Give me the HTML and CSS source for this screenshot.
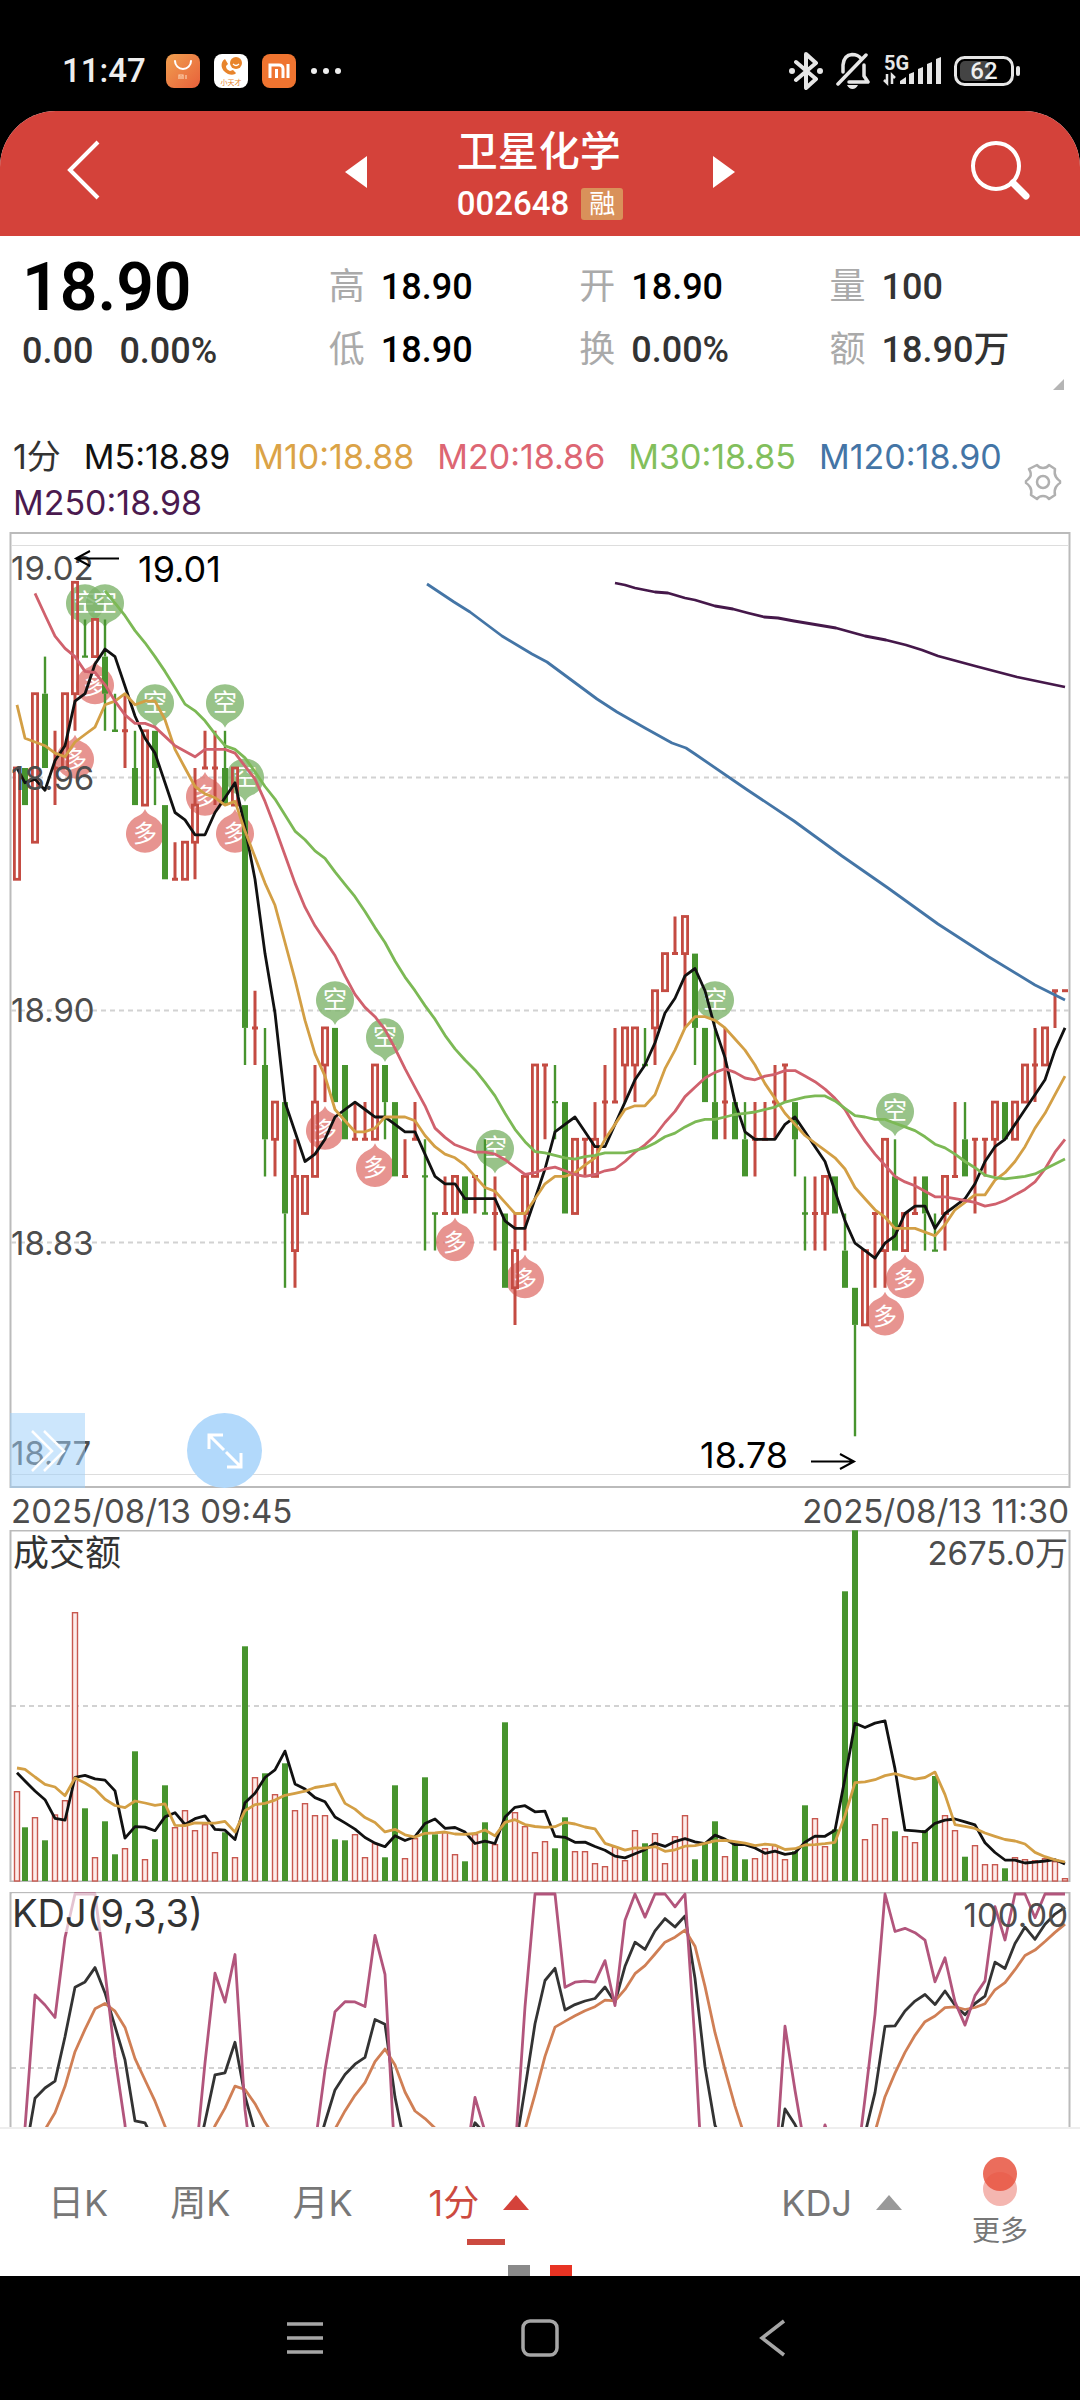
FILE: index.html
```html
<!DOCTYPE html>
<html lang="zh-CN">
<head>
<meta charset="utf-8">
<meta name="viewport" content="width=device-width, initial-scale=1">
<title>卫星化学 002648</title>
<link rel="stylesheet" href="styles.css">
</head>
<body>
<div class="status">
  <div class="status-left">
    <span class="clock">11:47</span>
    <svg class="app-icon" viewBox="0 0 34 34"><defs><linearGradient id="bag" x1="0" y1="0" x2="1" y2="1"><stop offset="0" stop-color="#f0a050"/><stop offset="1" stop-color="#e8603a"/></linearGradient></defs><rect width="34" height="34" rx="8" fill="url(#bag)"/><path d="M9 7a8 8 0 0 0 16 0" fill="none" stroke="#fff" stroke-width="2" stroke-linecap="round"/><path d="M13 25v-4h4v4M15 22v3M20 21v4" fill="none" stroke="#fbd0b0" stroke-width="1.2"/></svg>
    <svg class="app-icon" viewBox="0 0 34 34"><rect width="34" height="34" rx="8" fill="#fff"/><path d="M11 5c-5 3-5 11 3 15 3 1 7 1 8-1l-3-3-3 1c-3-1-4-3-4-5l2-2z" fill="#e8842c"/><circle cx="22" cy="9" r="6" fill="#e8842c"/><path d="M19 10q3 3 6 0" stroke="#fff" fill="none" stroke-width="1.2"/><text x="17" y="31" text-anchor="middle" class="tiny">小天才</text></svg>
    <svg class="app-icon" viewBox="0 0 34 34"><rect width="34" height="34" rx="8" fill="#ef7430"/><path d="M8 24V11h9q4 0 4 4v9M14.500 15v9M26 10v14" fill="none" stroke="#fff" stroke-width="3"/></svg>
    <svg class="dots" viewBox="0 0 32 8"><circle cx="4" cy="4" r="3"/><circle cx="16" cy="4" r="3"/><circle cx="28" cy="4" r="3"/></svg>
  </div>
  <div class="status-right">
    <svg class="s-icon" viewBox="0 0 34 38"><path d="M7 10l20 17-10 9V2l10 9L7 28" fill="none" stroke="#e6e6e6" stroke-width="4" stroke-linejoin="round" stroke-linecap="round"/><circle cx="3" cy="19" r="3" fill="#e6e6e6"/><circle cx="31" cy="19" r="3" fill="#e6e6e6"/></svg>
    <svg class="s-icon" viewBox="0 0 34 38"><path d="M7 20V13Q8 3 16 2.500q6 0 9 4M28 13v11l4 6H13M2 32L30 3" fill="none" stroke="#e6e6e6" stroke-width="3.500" stroke-linejoin="round" stroke-linecap="round"/><path d="M11 33h11q-2 4-5.500 4T11 33z" fill="#e6e6e6"/></svg>
    <svg class="signal" viewBox="0 0 58 38"><text x="1" y="18" class="net">5G</text><path d="M4 22v9l-3-3M9 32v-9l3 3" fill="none" stroke="#e6e6e6" stroke-width="2.500"/><g fill="#e6e6e6"><path d="M17 32v-3l6-4v7z"/><path d="M26 32V22l5-2v12z"/><path d="M35 32V17l5-2v17z"/><path d="M44 32V12l5-2v22z"/><path d="M53 32V7l5-2v27z"/></g></svg>
    <svg class="battery" viewBox="0 0 66 30"><rect x="1.500" y="1.500" width="57" height="27" rx="9" fill="none" stroke="#e6e6e6" stroke-width="3"/><rect x="6" y="5" width="30" height="20" rx="5" fill="#444"/><rect x="62" y="10" width="4" height="10" rx="2" fill="#e6e6e6"/><text x="30" y="23" text-anchor="middle" class="pct">62</text></svg>
  </div>
</div>

<main class="app">
  <header class="topbar">
    <button class="icon-btn back" aria-label="返回"><svg width="34" height="60" viewBox="0 0 34 60"><path d="M32 2L4 30l28 28" fill="none" stroke="#fff" stroke-width="4"/></svg></button>
    <div class="picker">
      <button class="icon-btn" aria-label="上一只"><svg width="22" height="32" viewBox="0 0 22 32"><path d="M22 0v32L0 16z" fill="#fff"/></svg></button>
      <div class="names">
        <h1>卫星化学</h1>
        <p class="code">002648 <span class="badge">融</span></p>
      </div>
      <button class="icon-btn" aria-label="下一只"><svg width="22" height="32" viewBox="0 0 22 32"><path d="M0 0v32l22-16z" fill="#fff"/></svg></button>
    </div>
    <button class="icon-btn search" aria-label="搜索"><svg width="60" height="62" viewBox="0 0 60 62"><circle cx="26" cy="27" r="23" fill="none" stroke="#fff" stroke-width="4"/><path d="M43 44l13 13" stroke="#fff" stroke-width="7" stroke-linecap="round"/></svg></button>
  </header>

  <section class="quote">
    <div class="price">
      <strong>18.90</strong>
      <p><span>0.00</span><span>0.00%</span></p>
    </div>
    <dl class="stats">
      <div><dt>高</dt><dd>18.90</dd></div>
      <div><dt>开</dt><dd>18.90</dd></div>
      <div><dt>量</dt><dd class="soft">100</dd></div>
      <div><dt>低</dt><dd>18.90</dd></div>
      <div><dt>换</dt><dd class="soft">0.00%</dd></div>
      <div><dt>额</dt><dd class="soft">18.90万</dd></div>
    </dl>
    <svg class="corner" viewBox="0 0 11 11"><path d="M11 0v11H0z" fill="#b5b5b5"/></svg>
  </section>

  <section class="legend">
    <div class="averages">
      <span class="period">1分</span><span class="m5">M5:18.89</span><span class="m10">M10:18.88</span><span class="m20">M20:18.86</span><span class="m30">M30:18.85</span><span class="m120">M120:18.90</span><span class="m250">M250:18.98</span>
    </div>
    <button class="icon-btn gear" aria-label="设置"><svg width="38" height="38" viewBox="0 0 38 38" fill="none" stroke="#b0b0b0" stroke-width="2.500" stroke-linejoin="round"><path d="M13 2q2 3 6 3t6-3l6 4q-1 5 1 8t4 4v2q-2 1-4 4t-1 8l-6 4q-2-3-6-3t-6 3l-6-4q1-5-1-8t-4-4v-2q2-1 4-4t-1-8z"/><circle cx="19" cy="19" r="6"/></svg></button>
  </section>

  <section class="kline">
    <svg class="chart" viewBox="0 0 1080 956">
      <g class="frame"><path d="M10 1H1070M10 955H1070M10.500 0V956M1069.500 0V956"/></g>
      <g class="inner"><path d="M11 13.500H1069M11 942.500H1069"/></g>
      <g class="grid"><path d="M11 245.500H1069M11 478.500H1069M11 710.500H1069"/></g>
      <g id="marks"></g>
      <g id="candles"></g>
      <g id="averages"></g>
      <g class="axis"><text x="11" y="48">19.02</text><text x="11" y="258">18.96</text><text x="11" y="490">18.90</text><text x="11" y="723">18.83</text><text x="11" y="933">18.77</text></g>
      <g class="peak"><text x="138" y="50">19.01</text><path d="M119 26.500H76M90 19L76 26.500L90 34"/><text x="700" y="936">18.78</text><path d="M811 929.500H854M840 922L854 929.500L840 937"/></g>
    </svg>
    <button class="expand-side" aria-label="展开"><svg width="36" height="44" viewBox="0 0 36 44"><path d="M2 2l20 20L2 42M14 2l20 20-20 20" fill="none" stroke="#fff" stroke-width="2.500"/></svg></button>
    <button class="fullscreen" aria-label="全屏"><svg width="38" height="38" viewBox="0 0 38 38"><path d="M17 3H3v14M3 3l15 15M21 35h14V21M35 35L20 20" fill="none" stroke="#fff" stroke-width="3"/></svg></button>
  </section>
  <div class="dates"><time>2025/08/13 09:45</time><time>2025/08/13 11:30</time></div>

  <section class="volume">
    <svg class="chart" viewBox="0 0 1080 352">
      <g class="grid"><path d="M11 176H1069"/></g>
      <g class="frame"><path d="M10 .5H1070M10 351.500H1070M10.500 0V352M1069.500 0V352"/></g>
      <g id="bars"></g>
      <g id="barlines"></g>
      <text class="caption" x="13" y="36">成交额</text>
      <text class="limit" x="1068" y="35">2675.0万</text>
    </svg>
  </section>

  <section class="kdj">
    <svg class="chart" viewBox="0 0 1080 235">
      <g class="grid"><path d="M11 176H1069"/></g>
      <g class="frame"><path d="M10 .5H1070M10.500 0V235M1069.500 0V235"/></g>
      <g id="kdjlines"></g>
      <rect x="12" y="1" width="186" height="39" fill="#fff" opacity=".65"/>
      <text class="caption wide" x="12" y="35">KDJ(9,3,3)</text>
      <text class="limit" x="1068" y="35">100.00</text>
    </svg>
  </section>

  <footer class="tools">
    <nav class="periods">
      <button>日K</button><button>周K</button><button>月K</button>
      <button class="active">1分<svg class="tri" viewBox="0 0 26 15"><path d="M13 0l13 15H0z" fill="#d4423a"/></svg></button>
    </nav>
    <button class="indicator">KDJ<svg class="tri" viewBox="0 0 26 15"><path d="M13 0l13 15H0z" fill="#999"/></svg></button>
    <button class="more"><svg width="36" height="52" viewBox="0 0 36 52"><circle cx="18" cy="33" r="17" fill="#f4b6b0"/><circle cx="18" cy="18" r="17" fill="#e8533f" opacity=".85"/></svg>更多</button>
    <div class="pages"><i></i><i class="on"></i></div>
  </footer>
</main>

<nav class="sysnav">
  <button class="icon-btn" aria-label="菜单"><svg width="38" height="38" viewBox="0 0 38 38"><path d="M1 5h36M1 19h36M1 33h36" stroke="#a6a6a6" stroke-width="3.500"/></svg></button>
  <button class="icon-btn" aria-label="主页"><svg width="38" height="38" viewBox="0 0 38 38"><rect x="2" y="2" width="34" height="34" rx="7" fill="none" stroke="#a6a6a6" stroke-width="3.500"/></svg></button>
  <button class="icon-btn" aria-label="后退"><svg width="38" height="38" viewBox="0 0 38 38"><path d="M28 2L6 19l22 17" fill="none" stroke="#a6a6a6" stroke-width="3.500"/></svg></button>
</nav>
<script src="chart.js"></script>
</body>
</html>
```
FILE: styles.css
```css
* { box-sizing: border-box; }
body {
  margin: 0;
  background: #000;
  color: #333;
  font-family: Inter, "Noto Sans CJK SC", sans-serif;
  font-size: 33px;
  line-height: 46px;
}
h1, p, dl, dd { margin: 0; }
button {
  border: 0;
  padding: 0;
  background: none;
  font: inherit;
  color: inherit;
}
.icon-btn { display: flex; }
svg { display: block; }

.status {
  height: 111px;
  padding: 32px 60px 0 62px;
  display: flex;
  justify-content: space-between;
  color: #eee;
  font-family: Roboto, "Noto Sans CJK SC", sans-serif;
}
.status-left, .status-right { display: flex; align-items: center; height: 78px; }
.status-left { gap: 14px; }
.status-right { gap: 13px; }
.clock { font-weight: 500; margin-right: 6px; }
.app-icon { width: 34px; height: 34px; }
.dots { width: 32px; height: 8px; fill: #eee; }
.tiny { font-size: 7px; fill: #e8842c; }
.s-icon { width: 34px; height: 38px; }
.signal { width: 58px; height: 38px; overflow: visible; }
.net { font-size: 20px; font-weight: 700; fill: #e6e6e6; }
.battery { width: 66px; height: 30px; }
.pct { font-size: 24px; font-weight: 500; fill: #eee; }

.app {
  background: #fff;
  border-radius: 56px 56px 0 0;
  overflow: hidden;
}
.topbar {
  height: 125px;
  padding: 0 50px 8px;
  background: #d4423a;
  color: #fff;
  display: grid;
  grid-template-columns: 1fr auto 1fr;
  align-items: center;
  font-family: Roboto, "Noto Sans CJK SC", sans-serif;
}
.back { padding-left: 16px; }
.search { justify-self: end; }
.picker { display: flex; align-items: center; gap: 90px; }
.picker > .icon-btn { padding-top: 5px; }
.names { padding-top: 10px; }
h1 { font-size: 41px; line-height: 58px; font-weight: 500; }
.code {
  display: flex;
  align-items: center;
  gap: 12px;
  font-size: 33px;
  font-weight: 500;
}
.badge {
  padding: 0 8px;
  border-radius: 3px;
  background: #d9915a;
  font-size: 26px;
  line-height: 32px;
  font-weight: 400;
}

.quote {
  position: relative;
  height: 194px;
  padding: 20px 0 0 22px;
  display: grid;
  grid-template-columns: 29fr 71fr;
  font-family: Roboto, "Noto Sans CJK SC", sans-serif;
  font-size: 36px;
}
.price strong {
  display: block;
  font-size: 66px;
  line-height: 64px;
  font-weight: 600;
  color: #000;
}
.price p { display: flex; gap: 26px; line-height: 62px; font-weight: 500; }
.stats {
  display: grid;
  grid-template-columns: repeat(3, 1fr);
  grid-auto-rows: 63px;
  line-height: 63px;
}
.stats div { display: flex; gap: 16px; }
.stats dt { color: #aaa; }
.stats dd { color: #000; font-weight: 500; }
.stats .soft { color: #333; }
.corner { position: absolute; right: 16px; bottom: 40px; width: 11px; height: 11px; }

.legend {
  display: flex;
  align-items: center;
  justify-content: space-between;
  padding: 4px 18px 6px 13px;
  font-size: 34px;
}
.averages { display: flex; flex-wrap: wrap; column-gap: 23px; }
.gear { padding-top: 4px; }
.period { color: #333; }
.m5 { color: #111; }
.m10 { color: #dba347; }
.m20 { color: #dd6673; }
.m30 { color: #82bf5c; }
.m120 { color: #4475a6; }
.m250 { color: #4b1a4f; }

.kline { position: relative; }
.chart { width: 100%; height: auto; overflow: hidden; }
.frame path { fill: none; stroke: #bbb; stroke-width: 2; }
.inner path { stroke: #ddd; stroke-width: 1; }
.grid path { stroke: #d2d2d2; stroke-width: 2; stroke-dasharray: 5 4; }
.axis text { fill: #4d4d4d; }
.peak text { font-size: 36px; fill: #000; }
.peak path { fill: none; stroke: #000; stroke-width: 2; }
.caption { font-size: 36px; fill: #333; }
.wide { font-size: 38px; }
.limit { fill: #4d4d4d; text-anchor: end; }
.mark { font-size: 24px; fill: #fff; text-anchor: middle; }
.up { fill: none; stroke: #c44b42; }
.down { fill: #47942e; stroke: #47942e; }
.bar-up { fill: #fdecea; stroke: #c8584f; stroke-width: 1.400; }
.bar-down { fill: #47942e; }
.line { fill: none; stroke-width: 2.800; stroke-linejoin: round; }
.expand-side, .fullscreen {
  position: absolute;
  bottom: 0;
  display: flex;
  align-items: center;
  justify-content: center;
  height: 75px;
  width: 75px;
}
.expand-side { left: 10px; background: rgba(158, 208, 250, .52); }
.fullscreen { left: 187px; border-radius: 50%; background: #b2d9fb; }
.dates {
  display: flex;
  justify-content: space-between;
  padding: 0 11px;
  height: 42px;
  color: #4d4d4d;
}
.volume { margin-bottom: 10px; }

.tools {
  position: relative;
  height: 149px;
  border-top: 2px solid #eee;
  padding: 0 52px 0 48px;
  display: flex;
  color: #777;
  font-size: 36px;
}
.periods { display: flex; gap: 62px; flex: 1; }
.periods button, .indicator { display: flex; align-items: center; gap: 24px; }
.periods .active { color: #cc4a40; position: relative; margin-left: 14px; }
.active::after {
  content: "";
  position: absolute;
  left: 38px;
  bottom: 31px;
  width: 38px;
  height: 6px;
  background: #cc4a40;
}
.tri { width: 26px; height: 15px; }
.indicator { margin-right: 70px; }
.more {
  display: flex;
  flex-direction: column;
  align-items: center;
  gap: 8px;
  padding-top: 27px;
  font-size: 28px;
  line-height: 30px;
}
.pages {
  position: absolute;
  bottom: 0;
  left: 50%;
  margin-left: -32px;
  display: flex;
  gap: 20px;
}
.pages i { width: 22px; height: 11px; background: #8a8a8a; }
.pages .on { background: #e83323; }

.sysnav {
  height: 124px;
  padding: 0 286px 0 286px;
  display: flex;
  align-items: center;
  justify-content: space-between;
}
```
FILE: chart.js
```js
// Each candle: colour, high, low, body top, body bottom in ticks of 0.01 below 19.01.
// u = up (hollow red), d = down (solid green).
const CANDLES = `u5 8 5 8|d5 6 5 6|u3 7 3 7|d2 5 3 5|u4 6 5 5|u3 5 3 5|u0 4 0 3|d1 2 2 2|u1 2 1 2|d1 4 2 3
d3 4 4 4|u3 5 4 4|d4 6 5 6|u4 6 4 6|d4 6 4 5|d6 8 6 8|u7 8 8 8|u7 8 7 8|u5 8 6 7|u4 5 5 5
u4 6 5 5|d4 6 5 6|u5 6 5 6|d6 13 6 12|u11 13 12 12|d12 16 13 15|u14 16 14 15|d14 19 14 17|u15 19 16 18|u16 17 16 17
u13 16 14 16|u12 14 12 13|d12 14 12 14|d13 15 13 15|u14 15 15 15|u14 15 15 15|u13 15 13 15|d13 15 13 14|d14 16 14 16|u15 16 16 16
u14 15 15 15|d15 18 16 16|d17 18 17 17|u16 17 17 17|u16 17 16 17|d16 17 16 17|u16 17 16 16|d15 17 17 17|u16 18 17 17|d17 19 17 19
u17 20 18 19|u16 18 16 17|u13 16 13 16|u13 15 13 13|d13 15 14 14|d14 17 14 17|u15 17 15 17|u15 16 15 15|u14 16 15 16|u13 15 14 14
u12 14 14 14|u12 14 12 13|u12 14 12 13|d12 13 13 13|u11 13 11 12|u10 11 10 11|u9 10 10 10|u9 12 9 10|d10 13 10 12|d12 14 12 14
d12 15 14 15|u12 15 14 14|d14 15 14 15|d14 16 15 16|u14 16 15 15|u14 15 15 15|u13 15 14 14|u13 14 13 13|d14 16 14 15|d16 18 17 17
u16 18 17 17|u16 18 16 17|d16 17 16 17|d17 19 18 19|d19 23 19 20|u18 20 18 20|u17 19 17 17|u15 19 15 18|d15 18 16 18|u17 18 17 18
u16 17 17 17|d16 18 16 17|d17 18 18 18|u16 18 16 17|u14 16 16 16|d14 16 15 16|u15 17 15 15|u15 16 15 15|u14 16 14 15|d14 15 14 15
u14 15 14 15|u13 14 13 14|u12 14 13 13|u12 13 12 13|u11 12 11 11|u11 11 11 11`
  .split(/[|\n]/).map(s => {
    const [hi, lo, top, bottom] = s.slice(1).split(' ').map(Number);
    const up = s[0] === 'u';
    return { up, hi, lo, top, bottom, close: up ? top : bottom };
  });

// Turnover per minute, full scale 1052.
const TURNOVER = [268,161,190,122,198,241,805,218,70,179,80,97,389,64,125,287,160,211,151,169,85,146,70,704,310,323,259,353,211,232,196,196,125,122,139,70,112,71,287,67,127,311,140,145,79,59,139,176,109,476,205,163,85,
118,98,191,88,88,52,43,102,61,151,113,142,52,133,196,65,115,179,73,113,65,67,97,106,64,89,227,187,103,155,869,1052,124,169,187,149,133,115,153,315,196,151,73,106,49,49,38,70,64,61,67,58,7];

const px = i => i === 0 ? 17 : 15 + 10 * i;
const py = k => Math.round((50.3 + 37.13 * k) * 10) / 10;
const fill = (id, html) => { document.getElementById(id).innerHTML = html; };
const line = (points, color) => `<polyline class="line" stroke="${color}" points="${points.map(p => p.join()).join(' ')}"/>`;

// Moving average over n values; lead holds the values that need earlier data.
const average = (values, n, lead, from = 0) => values.map((_, i) => {
  if (i < from) return null;
  if (i < n - 1) return lead[i - from];
  return values.slice(i - n + 1, i + 1).reduce((a, b) => a + b) / n;
});
const trace = (values, y) => values.map((v, i) => v === null ? null : [px(i), y(v)]).filter(Boolean);

fill('candles', CANDLES.map((c, i) => {
  const x = px(i), cls = c.up ? 'up' : 'down';
  const [h, l, t, b] = [c.hi, c.lo, c.top, c.bottom].map(py);
  const wick = c.up ? 3 : 2.4;
  if (c.top === c.bottom) return `<path class="${cls}" stroke-width="${wick}" d="M${x} ${h}V${l}M${x - 3} ${t}H${x + 3}"/>`;
  const body = c.up
    ? `<rect class="up" stroke-width="2.8" x="${x - 2.6}" y="${t}" width="5.2" height="${b - t}"/>`
    : `<rect class="down" stroke="none" stroke-width="0" x="${x - 3}" y="${t}" width="6" height="${b - t}"/>`;
  return `<path class="${cls}" stroke-width="${wick}" d="M${x} ${h}V${t}M${x} ${b}V${l}"/>${body}`;
}).join(''));

const sell = [7, 9, 14, 21, 23, 32, 37, 48, 70, 88];
const buy = [6, 8, 13, 19, 22, 31, 36, 44, 51, 87, 89];
fill('marks',
  sell.map(i => {
    const y = Math.max(py(CANDLES[i].hi) - 28, 71);
    return `<g opacity=".8"><path fill="#7fb56c" transform="translate(${px(i)} ${y})" d="M0 25q-2-5-7-7a19 19 0 1 1 14 0q-5 2-7 7z"/><text class="mark" x="${px(i)}" y="${y + 8}">空</text></g>`;
  }).join('') +
  buy.map(i => {
    const y = py(CANDLES[i].lo) + 29;
    return `<g opacity=".8"><path fill="#e27a75" transform="translate(${px(i)} ${y})" d="M0-25q2 5 7 7a19 19 0 1 1-14 0q5-2 7-7z"/><text class="mark" x="${px(i)}" y="${y + 8}">多</text></g>`;
  }).join(''));

const closes = CANDLES.map(c => c.close);
const m5 = average(closes, 5, [5, 5.4, 5.3, 5.6]);
const m10 = average(closes, 10, [3.3, 4.2, 4.3, 4.4, 4.6, 4.7, 4.3, 4.1, 3.9]);
const m20 = average(closes, 20, [.3, .88, 1.45, 1.78, 2, 2.4, 2.43, 2.76, 3.2, 3.57, 3.8, 3.8, 3.9, 4.15, 4.4, 4.55, 4.7], 2);
const m30 = average(closes, 30, [.23, .56, .9, 1.3, 1.63, 2, 2.4, 2.83, 3.28, 3.46, 3.73, 4.08, 4.4, 4.5, 4.73, 5.1, 5.5, 5.84, 6.27, 6.7], 9);
const m120 = [[427,52],[454,70],[470,80],[502,104],[532,122],[547,130],[597,167],[617,180],[645,196],[672,211],[686,216],[695,222],[746,257],[794,289],[842,324],[888,356],[938,392],[989,425],[1035,453],[1065,468]];
const m250 = [[615,51],[625,53],[635,56],[655,60],[668,61],[685,66],[695,68],[715,74],[733,77],[748,81],[764,85],[778,86],[794,89],[806,91],[824,94],[836,96],[865,104],[886,108],[906,113],[922,118],[938,124],[975,134],[1017,145],[1065,155]];
fill('averages',
  line(trace(m5, py), '#111') + line(trace(m10, py), '#d39f45') + line(trace(m20, py), '#d0616d') +
  line(trace(m30, py), '#7cb955') + line(m120, '#4475a6') + line(m250, '#45184a'));

const vy = v => Math.round((351 - v / 3) * 10) / 10;
fill('bars', CANDLES.map((c, i) => {
  const x = px(i), y = vy(TURNOVER[i]);
  return c.up
    ? `<rect class="bar-up" x="${x - 2.5}" y="${y}" width="5" height="${351 - y}"/>`
    : `<rect class="bar-down" x="${x - 3}" y="${y}" width="6" height="${351 - y}"/>`;
}).join(''));
fill('barlines',
  line(trace(average(TURNOVER, 5, [325, 300, 270, 244]), vy), '#111') +
  line(trace(average(TURNOVER, 10, [339, 335, 312, 290, 282, 256, 309, 294, 276]), vy), '#d39f45'));

// KDJ(9,3,3): the first nine values depend on data before the visible range.
const K = [5, 25, 41.5, 44.4, 46.4, 59.1, 73.3, 74.8, 78.9];
const D = [18, 21, 26.7, 32.5, 37.3, 44.9, 54.8, 61.2, 67.1];
for (let i = 9; i < CANDLES.length; i++) {
  const span = CANDLES.slice(i - 8, i + 1);
  const high = Math.min(...span.map(c => c.hi)), low = Math.max(...span.map(c => c.lo));
  K[i] = K[i - 1] * 2 / 3 + (low - closes[i]) / (low - high) * 100 / 3;
  D[i] = D[i - 1] * 2 / 3 + K[i] / 3;
}
const J = K.map((k, i) => Math.max(0, Math.min(100, 3 * k - 2 * D[i])));
const ky = v => Math.round((2 + (100 - v) * 3.49) * 10) / 10;
fill('kdjlines', line(trace(K, ky), '#333') + line(trace(D, ky), '#d07f55') + line(trace(J, ky), '#b2557c'));
```
